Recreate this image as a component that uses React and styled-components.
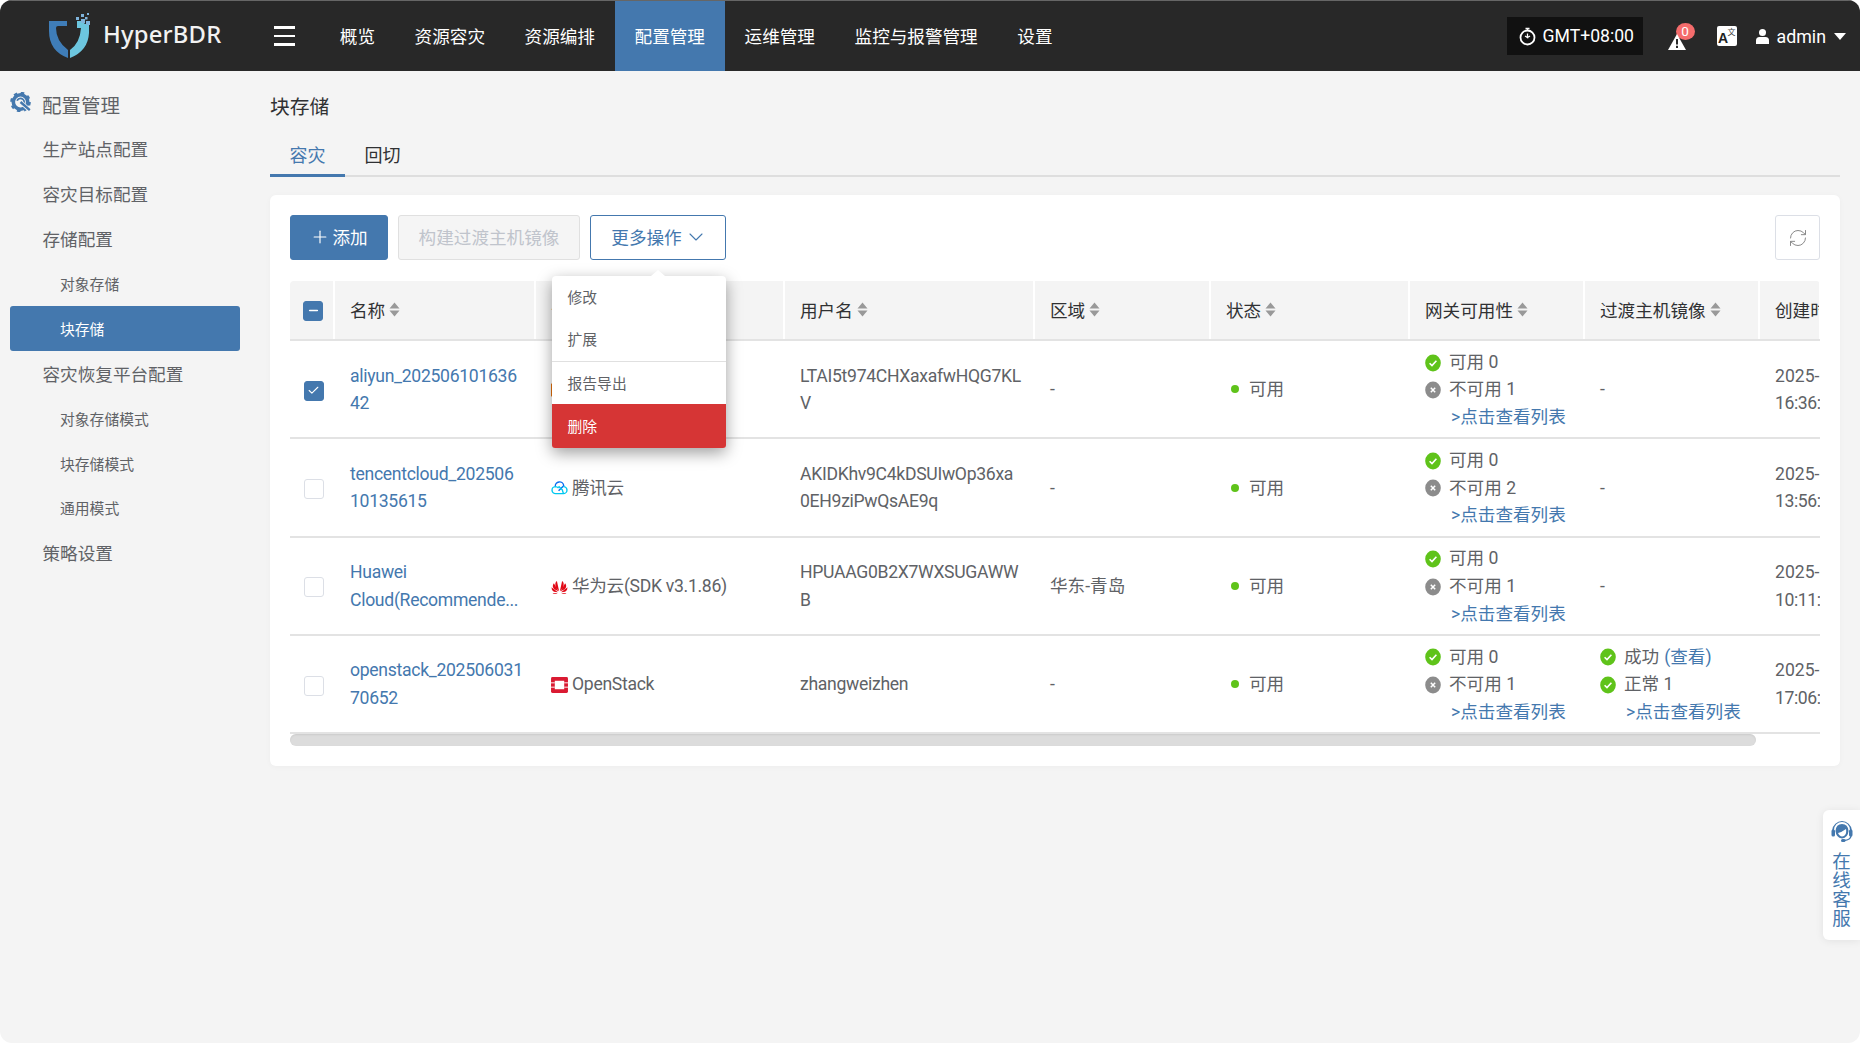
import React from 'react';
import styled, { createGlobalStyle } from 'styled-components';
import { ChevronDown, Plus, RefreshCw, Check, Minus } from 'lucide-react';

const BLUE = '#4478ae';
const FONT = 'Roboto, "Noto Sans CJK SC", sans-serif';

const Global = createGlobalStyle`
  html, body { margin: 0; padding: 0; height: 100%; overflow: hidden; background: #fff; }
  body { font-family: ${FONT}; color: #606266; }
  * { box-sizing: border-box; }
`;

const Shell = styled.div`
  width: 1860px; height: 1043px; display: flex; flex-direction: column;
  background: #f4f4f4; border-radius: 12px; overflow: hidden; position: relative;
`;
const Header = styled.header`
  height: 71px; flex: none; display: flex; align-items: stretch; background: #282828;
  border-top: 1px solid #666; color: #fff;
`;
const Brand = styled.div`
  width: 274px; flex: none; display: flex; align-items: center; padding-left: 48px; gap: 11px;
`;
const BrandName = styled.span`
  font-family: "Noto Sans", sans-serif; font-size: 23.8px; font-weight: 500; letter-spacing: .2px; color: #f2f2f2; line-height: 1; margin-top: -3px;
`;
const Burger = styled.button`
  width: 46px; flex: none; background: none; border: 0; padding: 0 25px 0 0; display: flex;
  flex-direction: column; justify-content: center; gap: 6px;
  span { display: block; height: 2.6px; background: #fff; width: 21px; }
`;
const Nav = styled.nav`display: flex; align-items: stretch;`;
const NavItem = styled.a`
  display: flex; align-items: center; padding: 0 19.8px 1px; font-size: 17.6px; color: #fff;
  background: ${p => (p.$active ? BLUE : 'transparent')};
`;
const HeaderRight = styled.div`
  margin-left: auto; display: flex; align-items: center; padding-right: 14px;
`;
const TimeBox = styled.div`
  width: 136px; height: 38px; background: #111; display: flex; align-items: center; padding-left: 12px;
  gap: 7px; font-size: 17.6px; color: #fff; margin-right: 25px;
`;
const Alert = styled.div`position: relative; width: 18px; height: 16px; margin-right: 31px; margin-top: 12px;`;
const Badge = styled.span`
  position: absolute; top: -11px; left: 8px; width: 19px; height: 17px; border-radius: 50%;
  background: #f56c6c; color: #fff; font-size: 13.5px; line-height: 17px; text-align: center;
`;
const UserName = styled.span`font-size: 17.8px; color: #fff; margin: 0 8px 0 8px;`;
const Caret = styled.i`
  width: 0; height: 0; border-left: 6px solid transparent; border-right: 6px solid transparent;
  border-top: 7px solid #fff; display: block;
`;

const Body = styled.div`flex: 1; display: flex; min-height: 0;`;
const Sidebar = styled.aside`width: 270px; flex: none; padding: 11px 30px 0 10px;`;
const MenuTitle = styled.div`
  height: 44px; display: flex; align-items: center; font-size: 19.5px; color: #606266; gap: 10px;
`;
const MenuItem = styled.a`
  height: 44.95px; display: flex; align-items: center; border-radius: 3px;
  padding-left: ${p => (p.$sub ? '50px' : '32.5px')};
  font-size: ${p => (p.$sub ? '14.8px' : '17.6px')};
  color: ${p => (p.$active ? '#fff' : '#606266')};
  background: ${p => (p.$active ? BLUE : 'transparent')};
`;

const Content = styled.main`flex: 1; min-width: 0; padding: 22px 20px 0 0;`;
const PageTitle = styled.h1`
  margin: 0; font-size: 19.8px; font-weight: 400; color: #303133; line-height: 30px;
`;
const Tabs = styled.div`
  display: flex; margin-top: 7px; height: 47px; border-bottom: 2px solid #dedede;
`;
const Tab = styled.a`
  width: 75px; text-align: center; font-size: 18px; line-height: 52px; height: 47px;
  color: ${p => (p.$active ? BLUE : '#303133')};
  border-bottom: 3px solid ${p => (p.$active ? BLUE : 'transparent')};
`;
const Card = styled.section`
  position: relative; margin-top: 18px; background: #fff; border-radius: 6px; padding: 20px;
  height: 571px; box-shadow: 0 1px 6px rgba(0,0,0,.03);
`;
const Toolbar = styled.div`display: flex; gap: 10px; height: 45px;`;
const BaseButton = styled.button`
  height: 45px; border-radius: 3px; font-family: ${FONT}; font-size: 17.6px; display: flex;
  align-items: center; justify-content: center; padding: 0 0 2px; background: #fff;
`;
const AddButton = styled(BaseButton)`
  width: 98px; background: ${BLUE}; border: 1px solid ${BLUE}; color: #fff; gap: 2px;
`;
const DisabledButton = styled(BaseButton)`
  width: 182px; background: #f5f5f5; border: 1px solid #e0e0e0; color: #c0c4cc;
`;
const MoreButton = styled(BaseButton)`
  width: 136px; border: 1px solid ${BLUE}; color: ${BLUE}; gap: 2px;
  svg { margin-right: -3px; }
`;
const RefreshButton = styled(BaseButton)`
  width: 45px; margin-left: auto; border: 1px solid #dcdfe6; color: #8a8a8a; padding: 0;
`;
const Dropdown = styled.div`position: relative;`;
const Menu = styled.div`
  position: absolute; z-index: 5; left: -38.5px; top: 61px; width: 174px; background: #fff;
  border-radius: 4px; box-shadow: 0 5px 16px rgba(0,0,0,.38);
  &::before {
    content: ''; position: absolute; left: 99px; top: -6px; width: 0; height: 0;
    border-left: 7px solid transparent; border-right: 7px solid transparent; border-bottom: 6px solid #fff;
  }
`;
const MenuEntry = styled.div`
  height: ${p => (p.$danger ? '44px' : p.$divided ? '43px' : '42px')}; display: flex; align-items: center; padding: 0 0 2px 16px;
  font-size: 14.8px;
  color: ${p => (p.$danger ? '#fff' : '#606266')};
  background: ${p => (p.$danger ? '#d63535' : 'transparent')};
  border-top: ${p => (p.$divided ? '1px solid #e0e0e0' : '0')};
  margin-top: ${p => (p.$divided ? '1px' : '0')};
  border-radius: ${p => (p.$danger ? '0 0 3px 3px' : '0')};
`;

const TableWrap = styled.div`margin-top: 21px; width: 1530px; overflow: hidden; border-radius: 4px 4px 0 0;`;
const Table = styled.table`
  width: 1730px; table-layout: fixed; border-collapse: collapse; font-size: 17.6px;
`;
const Th = styled.th`
  height: 59px; background: #f4f4f4; font-weight: 400; text-align: ${p => (p.$center ? 'center' : 'left')};
  color: #303133; padding: ${p => (p.$center ? '0 0 0 3px' : '0 0 2px 15px')}; border-right: 2px solid #fff;
  border-bottom: 2px solid #e3e3e3; white-space: nowrap; overflow: hidden;
`;
const HeadInner = styled.span`display: inline-flex; align-items: center; gap: 4px;`;
const Td = styled.td`
  height: 98.3px; padding: ${p => (p.$center ? '2px 0 0 3px' : '2px 0 0 16px')}; border-bottom: 2px solid #e3e3e3;
  line-height: 27.6px; color: #606266; text-align: ${p => (p.$center ? 'center' : 'left')};
  vertical-align: middle; white-space: nowrap; overflow: hidden;
`;
const NameLink = styled.a`color: ${BLUE}; letter-spacing: -.3px;`;
const Tight = styled.span`letter-spacing: ${p => p.$by};`;
const Box = styled.span`
  width: 20px; height: 20px; display: inline-flex; align-items: center; justify-content: center;
  border-radius: 3px; vertical-align: middle;
  background: ${p => (p.$on ? BLUE : '#fff')};
  border: 1px solid ${p => (p.$on ? BLUE : '#dcdfe6')};
  color: #fff;
`;
const Provider = styled.span`display: flex; align-items: center; gap: 4px; letter-spacing: -.3px;`;
const Dot = styled.i`
  display: inline-block; width: 8px; height: 8px; border-radius: 50%; background: #5fc31a;
  margin: 0 10px 0 5px; vertical-align: 2px;
`;
const StatLine = styled.div`display: flex; align-items: center; gap: 8px; height: 27.6px;`;
const ListLink = styled.a`display: block; color: ${BLUE}; padding-left: 26px;`;
const Accent = styled.span`color: ${BLUE}; margin-left: 5px;`;

const ScrollTrack = styled.div`height: 12px;`;
const ScrollThumb = styled.div`
  width: 1466px; height: 12px; border-radius: 6px; background: #dcdcdc;
  box-shadow: inset 0 1px 2px rgba(0,0,0,.08);
`;

const Help = styled.aside`
  position: absolute; right: 0; top: 810px; width: 37px; height: 130px; background: #fff;
  border-radius: 6px 0 0 6px; box-shadow: 0 1px 8px rgba(0,0,0,.08); display: flex; flex-direction: column;
  align-items: center; padding-top: 10px; color: ${BLUE}; font-size: 18.5px; line-height: 19px;
`;
const HelpText = styled.div`width: 19px; margin-top: 9px; text-align: center;`;

const Sort = () => (
  <svg width="11" height="15" viewBox="0 0 11 15"><path d="M5.5 .5 L10.5 6.5 H.5Z M5.5 14.5 L.5 8.5 H10.5Z" fill="#999" /></svg>
);
const OkIcon = () => (
  <svg width="16" height="18" viewBox="0 0 16 18" style={{ flex: 'none' }}>
    <ellipse cx="8" cy="9" rx="7.8" ry="8.4" fill="#5fc31a" />
    <path d="M4.6 9.2 L7 11.6 L11.4 6.8" fill="none" stroke="#fff" strokeWidth="1.6" />
  </svg>
);
const OffIcon = () => (
  <svg width="16" height="18" viewBox="0 0 16 18" style={{ flex: 'none' }}>
    <ellipse cx="8" cy="9" rx="7.8" ry="8.4" fill="#8c8c8c" />
    <path d="M5.8 6.8 L10.2 11.2 M10.2 6.8 L5.8 11.2" fill="none" stroke="#fff" strokeWidth="1.5" />
  </svg>
);
const Logo = () => (
  <svg width="44" height="46" viewBox="0 0 44 46" style={{ flex: 'none' }}>
    <path d="M1 8 H19 V13 H10 Q8 13 8 15 Q8 28 20 37 V45 Q1 38 1 18Z" fill="#3f7db8" />
    <path d="M22 45 V37 Q32 30 33 15 H29 V8 H34 L37 11 H41 V20 Q40 38 22 45Z" fill="#6cc6df" />
    <g fill="#7fb4dc">
      <rect x="28" y="4" width="3" height="3" /><rect x="33" y="6" width="4" height="4" /><rect x="38" y="8" width="4" height="4" />
      <rect x="33" y="1" width="3" height="3" /><rect x="39" y="0" width="2" height="2" /><rect x="37" y="4" width="2.5" height="2.5" />
    </g>
  </svg>
);
const Clock = () => (
  <svg width="17" height="19" viewBox="0 0 17 19" style={{ flex: 'none' }}>
    <circle cx="8.5" cy="10.5" r="7" fill="none" stroke="#fff" strokeWidth="1.8" />
    <path d="M6.5 1.5 H10.5 M8.5 1.5 V4 M8.5 6.5 V10.5 L6 9 M8.5 10.5 L11 9" stroke="#fff" strokeWidth="1.3" fill="none" />
  </svg>
);
const Warn = () => (
  <svg width="18" height="16" viewBox="0 0 18 16" style={{ position: 'absolute', left: 0, top: 0, zIndex: 1 }}>
    <path d="M9 0 L18 16 H0Z" fill="#fff" />
    <path d="M9 5 V10.5 M9 11.8 V14" stroke="#282828" strokeWidth="2" />
  </svg>
);
const LangIcon = () => (
  <svg width="20" height="20" viewBox="0 0 20 20" style={{ marginRight: 19 }}>
    <rect width="20" height="20" rx="2" fill="#fff" />
    <text x="1" y="17" fontSize="14" fontWeight="700" fill="#222" fontFamily="Liberation Sans, sans-serif">A</text>
    <text x="10.5" y="9" fontSize="8" fill="#444" fontFamily="Noto Sans CJK SC, sans-serif">文</text>
  </svg>
);
const UserIcon = () => (
  <svg width="13" height="15" viewBox="0 0 13 15">
    <circle cx="6.5" cy="3.6" r="3.5" fill="#fff" />
    <path d="M0 15 V11.5 Q0 8 3.5 8 H9.5 Q13 8 13 11.5 V15Z" fill="#fff" />
  </svg>
);
const GearIcon = () => (
  <svg width="22" height="20" viewBox="0 0 22 20" style={{ flex: 'none', marginTop: -5 }}>
    <g transform="translate(1 0)">
      <circle cx="9.5" cy="10" r="7.2" fill="none" stroke={BLUE} strokeWidth="3.6" />
      <circle cx="9.5" cy="10" r="9" fill="none" stroke={BLUE} strokeWidth="2.6" strokeDasharray="3.4 3.67" />
      <circle cx="9.5" cy="10" r="3.6" fill="none" stroke={BLUE} strokeWidth="1.8" strokeDasharray="14 8" transform="rotate(200 9.5 10)" />
      <path d="M10 10.5 L18.5 18" stroke="#f4f4f4" strokeWidth="4.2" />
      <path d="M9.5 10 L18.8 18.2" stroke={BLUE} strokeWidth="2.4" />
    </g>
  </svg>
);
const Aliyun = () => (
  <svg width="17" height="16" viewBox="0 0 18 16" style={{ flex: 'none' }}>
    <path d="M6 2 H2 Q0 2 0 4 V12 Q0 14 2 14 H6 M12 2 H16 Q18 2 18 4 V12 Q18 14 16 14 H12" fill="none" stroke="#e8710a" strokeWidth="2.4" />
  </svg>
);
const Tencent = () => (
  <svg width="17" height="14" viewBox="0 0 18 15" style={{ flex: 'none' }}>
    <path d="M4.5 6 A4.5 4.5 0 0 1 13.5 5 L8 10.5" fill="none" stroke="#0a6cf0" strokeWidth="1.5" />
    <path d="M8 5.5 L12 9.5 Q13 13.5 13.5 13.5 H5 A3.7 3.7 0 0 1 4.5 6 Q6.5 6 8 7.5 M13 6 A3.7 3.7 0 0 1 13.5 13.5" fill="none" stroke="#00c8f0" strokeWidth="1.5" />
  </svg>
);
const Huawei = () => (
  <svg width="17" height="14" viewBox="0 0 18 15" fill="#e10a17" style={{ flex: 'none' }}>
    <path d="M8.6 12 L6.2 1 Q3.4 3 5.2 8Z" />
    <path d="M9.4 12 L11.8 1 Q14.6 3 12.8 8Z" />
    <path d="M8 12 L3 3.4 Q.4 6.5 3.4 9.8Z" />
    <path d="M10 12 L15 3.4 Q17.6 6.5 14.6 9.8Z" />
    <path d="M7.4 13 L.4 7.8 Q.2 11.2 3 12.6Z" />
    <path d="M10.6 13 L17.6 7.8 Q17.8 11.2 15 12.6Z" />
    <path d="M7 13.8 H1.6 Q3.6 15.6 7 13.8Z" />
    <path d="M11 13.8 H16.4 Q14.4 15.6 11 13.8Z" />
  </svg>
);
const OpenStack = () => (
  <svg width="17" height="16" viewBox="0 0 18 17" style={{ flex: 'none' }}>
    <rect width="18" height="17" rx="1.5" fill="#da1a32" />
    <rect x="4" y="4" width="10" height="9" fill="#fff" />
    <path d="M0 6.2 H4 M0 10.8 H4 M14 6.2 H18 M14 10.8 H18" stroke="#fff" strokeWidth="1" />
  </svg>
);
const Headset = () => (
  <svg width="22" height="24" viewBox="0 0 22 24" fill={BLUE}>
    <path d="M11 1 A10 10 0 0 0 1.2 10 H3 A8 8 0 0 1 19 10 H20.8 A10 10 0 0 0 11 1Z" />
    <path d="M4.5 11 Q5 4 11 4 Q17 4 17.5 11 Q17 17.5 11 18.5 Q5 17.5 4.5 11Z" />
    <path d="M7 13 Q11 12 15 9 Q16 14 13 16 Q9 17.5 7 13Z" fill="#fff" />
    <rect x="0.5" y="9.5" width="3.5" height="7" rx="1.5" />
    <rect x="18" y="9.5" width="3.5" height="7" rx="1.5" />
    <path d="M20 16 Q19.5 20 13 20.5" fill="none" stroke={BLUE} strokeWidth="1.4" />
    <rect x="10" y="19" width="4.5" height="3" rx="1.5" />
  </svg>
);

const NAV = ['概览', '资源容灾', '资源编排', '配置管理', '运维管理', '监控与报警管理', '设置'];
const SIDE = [
  ['生产站点配置'], ['容灾目标配置'], ['存储配置'], ['对象存储', 'sub'], ['块存储', 'sub', 'active'],
  ['容灾恢复平台配置'], ['对象存储模式', 'sub'], ['块存储模式', 'sub'], ['通用模式', 'sub'], ['策略设置'],
];
const COLS = [44, 201, 249, 250, 176, 199, 175, 175, 61];
const HEAD = ['名称', '云平台类型', '用户名', '区域', '状态', '网关可用性', '过渡主机镜像', '创建时间'];
const ROWS = [
  { name: ['aliyun_202506101636', '42'], on: true, icon: <Aliyun />, provider: '阿里云', user: ['LTAI5t974CHXaxafwHQG7KL', 'V'], region: '-', bad: 1, time: '16:36:42' },
  { name: ['tencentcloud_202506', '10135615'], icon: <Tencent />, provider: '腾讯云', user: ['AKIDKhv9C4kDSUIwOp36xa', '0EH9ziPwQsAE9q'], region: '-', bad: 2, time: '13:56:15' },
  { name: ['Huawei', 'Cloud(Recommende...'], icon: <Huawei />, provider: '华为云(SDK v3.1.86)', user: ['HPUAAG0B2X7WXSUGAWW', 'B'], region: '华东-青岛', bad: 1, time: '10:11:20' },
  { name: ['openstack_202506031', '70652'], icon: <OpenStack />, provider: 'OpenStack', user: ['zhangweizhen'], region: '-', bad: 1, time: '17:06:52', image: true },
];

const TwoLines = ({ lines }) => lines.map((l, i) => <React.Fragment key={l}>{i > 0 && <br />}{l}</React.Fragment>);

export default function App() {
  return (
    <Shell>
      <Global />
      <Header>
        <Brand><Logo /><BrandName>HyperBDR</BrandName></Brand>
        <Burger aria-label="menu"><span /><span /><span /></Burger>
        <Nav>{NAV.map(n => <NavItem key={n} $active={n === '配置管理'}>{n}</NavItem>)}</Nav>
        <HeaderRight>
          <TimeBox><Clock />GMT+08:00</TimeBox>
          <Alert><Warn /><Badge>0</Badge></Alert>
          <LangIcon />
          <UserIcon />
          <UserName>admin</UserName>
          <Caret />
        </HeaderRight>
      </Header>
      <Body>
        <Sidebar>
          <MenuTitle><GearIcon />配置管理</MenuTitle>
          {SIDE.map(([t, sub, active]) => <MenuItem key={t} $sub={!!sub} $active={!!active}>{t}</MenuItem>)}
        </Sidebar>
        <Content>
          <PageTitle>块存储</PageTitle>
          <Tabs><Tab $active>容灾</Tab><Tab>回切</Tab></Tabs>
          <Card>
            <Toolbar>
              <AddButton><Plus size={20} strokeWidth={1.4} />添加</AddButton>
              <DisabledButton>构建过渡主机镜像</DisabledButton>
              <Dropdown>
                <MoreButton>更多操作<ChevronDown size={24} strokeWidth={1.1} /></MoreButton>
                <Menu>
                  <MenuEntry>修改</MenuEntry>
                  <MenuEntry>扩展</MenuEntry>
                  <MenuEntry $divided>报告导出</MenuEntry>
                  <MenuEntry $danger>删除</MenuEntry>
                </Menu>
              </Dropdown>
              <RefreshButton aria-label="refresh"><RefreshCw size={20} strokeWidth={1.2} /></RefreshButton>
            </Toolbar>
            <TableWrap>
              <Table>
                <colgroup>{COLS.map((c, i) => <col key={i} style={{ width: c }} />)}</colgroup>
                <thead>
                  <tr>
                    <Th $center><Box $on><Minus size={13} strokeWidth={3} /></Box></Th>
                    {HEAD.map(h => <Th key={h}><HeadInner>{h}{h !== '创建时间' && <Sort />}</HeadInner></Th>)}
                    <Th />
                  </tr>
                </thead>
                <tbody>
                  {ROWS.map(r => (
                    <tr key={r.provider}>
                      <Td $center><Box $on={r.on}>{r.on && <Check size={13} strokeWidth={2} />}</Box></Td>
                      <Td><NameLink><TwoLines lines={r.name} /></NameLink></Td>
                      <Td><Provider>{r.icon}{r.provider}</Provider></Td>
                      <Td><Tight $by="-.3px"><TwoLines lines={r.user} /></Tight></Td>
                      <Td>{r.region}</Td>
                      <Td><Dot />可用</Td>
                      <Td>
                        <StatLine><OkIcon />可用 0</StatLine>
                        <StatLine><OffIcon />不可用 {r.bad}</StatLine>
                        <ListLink>&gt;点击查看列表</ListLink>
                      </Td>
                      <Td>
                        {r.image ? (
                          <>
                            <StatLine><OkIcon /><span>成功<Accent>(查看)</Accent></span></StatLine>
                            <StatLine><OkIcon />正常 1</StatLine>
                            <ListLink>&gt;点击查看列表</ListLink>
                          </>
                        ) : '-'}
                      </Td>
                      <Td>2025-06-10<br /><Tight $by="-.4px">{r.time}</Tight></Td>
                      <Td />
                    </tr>
                  ))}
                </tbody>
              </Table>
            </TableWrap>
            <ScrollTrack><ScrollThumb /></ScrollTrack>
          </Card>
        </Content>
      </Body>
      <Help>
        <Headset />
        <HelpText>在线客服</HelpText>
      </Help>
    </Shell>
  );
}
